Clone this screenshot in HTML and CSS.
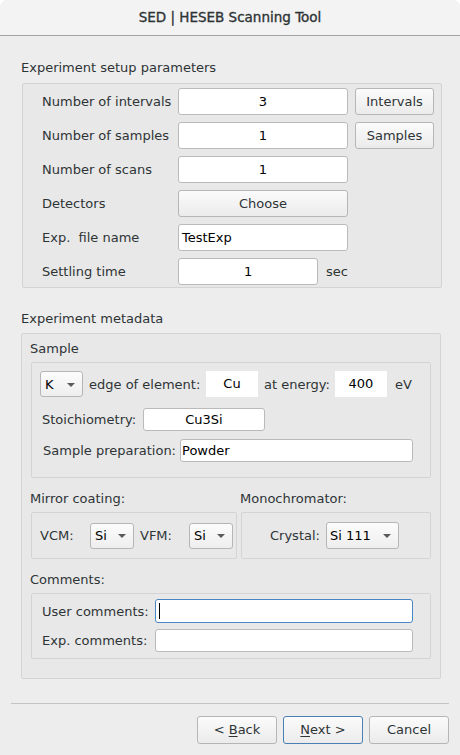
FILE: index.html
```html
<!DOCTYPE html>
<html>
<head>
<meta charset="utf-8">
<link rel="stylesheet" href="styles.css">
</head>
<body>
<div class="window">
  <div class="titlebar">SED | HESEB Scanning Tool</div>
  <div class="content">
    <div class="gtitle">Experiment setup parameters</div>
    <div class="group group1">
      <div class="grid">
        <div class="lbl">Number of intervals</div>
        <div class="field center">3</div>
        <div class="btn side">Intervals</div>

        <div class="lbl">Number of samples</div>
        <div class="field center">1</div>
        <div class="btn side">Samples</div>

        <div class="lbl">Number of scans</div>
        <div class="field center">1</div>
        <div></div>

        <div class="lbl">Detectors</div>
        <div class="btn">Choose</div>
        <div></div>

        <div class="lbl">Exp.&nbsp; file name</div>
        <div class="field left">TestExp</div>
        <div></div>

        <div class="lbl">Settling time</div>
        <div class="timerow"><div class="field center short">1</div><span class="unit">sec</span></div>
        <div></div>
      </div>
    </div>

    <div class="gtitle gtitle2">Experiment metadata</div>
    <div class="group group2">
      <div class="subtitle">Sample</div>
      <div class="group sample">
        <div class="row edge">
          <div class="combo combo-k"><span>K</span><i class="arrow"></i></div>
          <span class="t t-edge">edge of element:</span>
          <div class="plain">Cu</div>
          <span class="t t-energy">at energy:</span>
          <div class="plain">400</div>
          <span class="t t-ev">eV</span>
        </div>
        <div class="row stoich">
          <span class="t t-stoich">Stoichiometry:</span>
          <div class="field center stoich-field">Cu3Si</div>
        </div>
        <div class="row prep">
          <span class="t t-prep">Sample preparation:</span>
          <div class="field left prep-field">Powder</div>
        </div>
      </div>

      <div class="pair">
        <div class="col col-mirror">
          <div class="subtitle sub2">Mirror coating:</div>
          <div class="group box-mirror">
            <span class="t t-vcm">VCM:</span>
            <div class="combo combo-si"><span>Si</span><i class="arrow"></i></div>
            <span class="t t-vfm">VFM:</span>
            <div class="combo combo-si"><span>Si</span><i class="arrow"></i></div>
          </div>
        </div>
        <div class="col col-mono">
          <div class="subtitle sub2">Monochromator:</div>
          <div class="group box-mono">
            <span class="t t-crystal">Crystal:</span>
            <div class="combo combo-crystal"><span>Si 111</span><i class="arrow"></i></div>
          </div>
        </div>
      </div>

      <div class="subtitle sub2">Comments:</div>
      <div class="group comments">
        <div class="row crow">
          <span class="t t-com">User comments:</span>
          <div class="field comfield focused"><i class="caret"></i></div>
        </div>
        <div class="row crow crow2">
          <span class="t t-com">Exp. comments:</span>
          <div class="field comfield"></div>
        </div>
      </div>
    </div>
  </div>
  <div class="footer">
    <div class="sep"></div>
    <div class="buttons">
      <div class="btn dlg">&lt; <u>B</u>ack</div>
      <div class="btn dlg default"><u>N</u>ext &gt;</div>
      <div class="btn dlg">Cancel</div>
    </div>
  </div>
</div>
</body>
</html>
```

FILE: styles.css
```css
html, body {
  margin: 0;
  padding: 0;
  background: #ffffff;
}
body {
  width: 460px;
  height: 755px;
  overflow: hidden;
  font-family: "DejaVu Sans", "Liberation Sans", sans-serif;
  font-size: 13px;
  color: #2e3436;
}
.window {
  width: 460px;
  height: 755px;
  background: #ededed;
  border-radius: 7px 7px 0 0;
  overflow: hidden;
}
.titlebar {
  height: 35px;
  line-height: 35px;
  text-align: center;
  background: #f3f3f3;
  border-bottom: 1px solid #a3a3a3;
  font-size: 13.5px;
  -webkit-text-stroke: 0.35px #2e3436;
  color: #2e3436;
}
.content {
  padding: 24px 18px 0 21px;
}
.gtitle {
  height: 16px;
  line-height: 16px;
}
.gtitle2 {
  margin-top: 23px;
}
.group {
  border: 1px solid #d4d4d4;
  border-radius: 2px;
  background: #e8e8e8;
}
.group1 {
  margin-top: 7px;
  margin-left: 1px;
  padding: 4px 7px 2px 19px;
}
.grid {
  display: grid;
  grid-template-columns: 129px 170px 79px;
  grid-auto-rows: 27px;
  column-gap: 7px;
  row-gap: 7px;
  align-items: center;
}
.lbl {
  line-height: 27px;
  white-space: nowrap;
}
.field {
  box-sizing: border-box;
  height: 27px;
  line-height: 25px;
  background: #ffffff;
  border: 1px solid #bababa;
  border-radius: 3px;
  color: #000;
}
.center { text-align: center; }
.left { padding-left: 3px; }
.btn {
  box-sizing: border-box;
  height: 27px;
  line-height: 25px;
  text-align: center;
  border: 1px solid #b6b6b6;
  border-radius: 3px;
  background: linear-gradient(#fbfbfb, #ebebeb);
  color: #2e3436;
}
.timerow {
  display: flex;
  align-items: center;
}
.short {
  width: 142px;
}
.unit {
  margin-left: 8px;
}

.group2 {
  margin-top: 6px;
  margin-right: 1px;
  padding: 7px 9px 19px 9px;
}
.subtitle {
  height: 16px;
  line-height: 16px;
  margin-left: -1px;
}
.sub2 {
  margin-top: 13px;
}
.sample {
  margin-top: 5px;
  padding: 8px 8px 15px 8px;
}
.row {
  display: flex;
  align-items: center;
}
.t {
  display: inline-block;
  white-space: nowrap;
}
.combo {
  box-sizing: border-box;
  height: 26px;
  display: flex;
  align-items: center;
  justify-content: space-between;
  border: 1px solid #b6b6b6;
  border-radius: 3px;
  background: linear-gradient(#fcfcfc, #eeeeee);
  padding: 0 7px 0 4px;
  color: #000;
}
.arrow {
  width: 0;
  height: 0;
  border-left: 4px solid transparent;
  border-right: 4px solid transparent;
  border-top: 4px solid #5a5a5a;
  margin-top: 1px;
}
.combo-k { width: 43px; }
.t-edge { width: 123px; padding-left: 6px; box-sizing: border-box; }
.plain {
  width: 52px;
  height: 26px;
  line-height: 26px;
  background: #fff;
  text-align: center;
  color: #000;
}
.t-energy { width: 77px; padding-left: 6px; box-sizing: border-box; }
.t-ev { padding-left: 8px; }
.stoich {
  margin-top: 11px;
  padding-left: 2px;
}
.t-stoich { width: 101px; }
.stoich-field { width: 122px; height: 23px; line-height: 21px; }
.prep {
  margin-top: 8px;
  padding-left: 3px;
}
.t-prep { width: 137px; }
.prep-field { width: 233px; height: 23px; line-height: 21px; padding-left: 1px; }

.pair {
  display: flex;
  gap: 4px;
}
.col-mirror { width: 206px; }
.col-mono { flex: 1; }
.box-mirror, .box-mono {
  margin-top: 5px;
  box-sizing: border-box;
  height: 47px;
  display: flex;
  align-items: center;
}
.box-mirror { padding-left: 8px; }
.t-vcm { width: 50px; }
.combo-si { width: 44px; }
.t-vfm { padding-left: 6px; box-sizing: border-box; width: 55px; }
.box-mono { padding-left: 28px; }
.t-crystal { width: 56px; }
.combo-crystal { width: 73px; height: 27px; padding-left: 3px; }

.comments {
  margin-top: 5px;
  padding: 5px 8px 6px 10px;
}
.t-com { width: 113px; }
.comfield { width: 258px; height: 23px; position: relative; }
.focused { border-color: #4a86c5; height: 24px; }
.caret {
  position: absolute;
  left: 3px;
  top: 3px;
  width: 1px;
  height: 16px;
  background: #000;
}
.crow2 { margin-top: 6px; }

.footer {
  padding: 24px 11px 0 11px;
}
.sep {
  height: 1px;
  background: #c4c4c4;
}
.buttons {
  margin-top: 12px;
  display: flex;
  justify-content: flex-end;
  gap: 6px;
}
.dlg {
  width: 80px;
  height: 28px;
  line-height: 26px;
}
.dlg u {
  text-decoration: underline;
  text-underline-offset: 2px;
}
.default {
  border-color: #4a7fb5;
}
```
